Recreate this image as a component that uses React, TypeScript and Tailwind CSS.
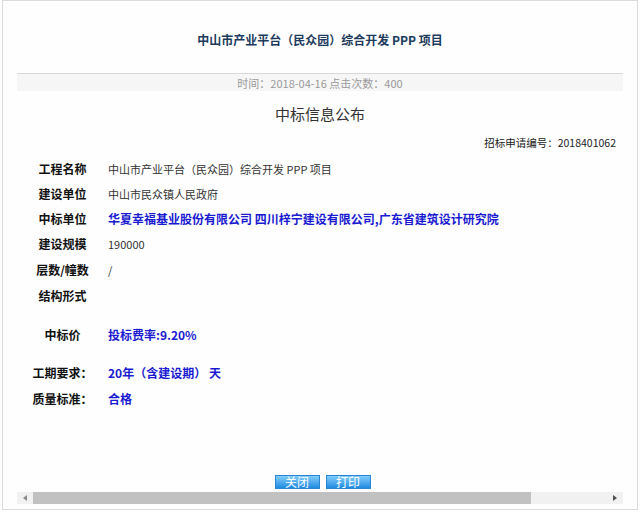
import React from 'react';

const rows: { label: string; value: string; blue?: boolean; h: string }[] = [
  { label: '工程名称', value: '中山市产业平台（民众园）综合开发 PPP 项目', h: 'h-[25px]' },
  { label: '建设单位', value: '中山市民众镇人民政府', h: 'h-[25px]' },
  { label: '中标单位', value: '华夏幸福基业股份有限公司 四川梓宁建设有限公司,广东省建筑设计研究院', blue: true, h: 'h-[25px]' },
  { label: '建设规模', value: '190000', h: 'h-[26px]' },
  { label: '层数/幢数', value: '/', h: 'h-[26px]' },
  { label: '结构形式', value: '', h: 'h-[26px]' },
  { label: '中标价', value: '投标费率:9.20%', blue: true, h: 'h-[52px]' },
  { label: '工期要求：', value: '20年（含建设期） 天', blue: true, h: 'h-[24px]' },
  { label: '质量标准：', value: '合格', blue: true, h: 'h-[28px]' },
];

export default function App() {
  return (
    <div
      className="w-[641px] h-[512px] bg-white overflow-hidden"
      style={{ fontFamily: '"Noto Sans CJK SC", "Liberation Sans", sans-serif' }}
    >
      <div className="ml-[2px] w-[636px] h-[510px] border border-[#dcdcdc] bg-[#fefefe] flex flex-col">
        {/* title */}
        <div className="h-[72px] pt-[31px] text-center text-[12px] leading-[16px] font-bold text-[#1d3a5c]">
          中山市产业平台（民众园）综合开发 PPP 项目
        </div>

        {/* date band */}
        <div className="mx-[14px] h-[18px] border-t border-[#d8d8d8] bg-[#f6f6f6] flex items-center justify-center text-[11px] leading-[14px] text-[#9a9a9a]">
          时间：2018-04-16 点击次数：400
        </div>

        <div className="mt-[13px] text-center text-[15px] leading-[20px] text-[#333]">中标信息公布</div>

        <div className="mt-[11px] pr-[21px] text-right text-[10.5px] leading-[16px] text-[#222]">
          招标申请编号：2018401062
        </div>

        <div className="mt-[5px] flex flex-col">
          {rows.map((r) => (
            <div key={r.label} className={`${r.h} flex items-center leading-[16px]`}>
              <div className="ml-[27px] w-[65px] text-center text-[12px] font-bold text-[#111]">{r.label}</div>
              <div
                className={
                  r.blue
                    ? 'ml-[13px] text-[12px] font-bold text-[#1a1ad0]'
                    : 'ml-[13px] text-[11px] text-[#333]'
                }
              >
                {r.value}
              </div>
            </div>
          ))}
        </div>

        {/* buttons */}
        <div className="mt-auto pl-[5px] flex justify-center gap-[6px]">
          {['关闭', '打印'].map((t) => (
            <button
              key={t}
              className="w-[45px] h-[14px] border border-[#2a86d2] bg-gradient-to-b from-[#7fcdfa] to-[#1b8be0] text-white text-[12px] leading-[12px] flex items-center justify-center"
            >
              {t}
            </button>
          ))}
        </div>

        {/* horizontal scrollbar */}
        <div className="mx-[14px] mt-[3px] mb-[5px] h-[12px] bg-[#f1f1f1] flex items-center">
          <div className="w-[16px] h-full flex items-center justify-center">
            <svg width="4" height="6" viewBox="0 0 4 6">
              <path d="M4 0 L0 3 L4 6 Z" fill="#8a8a8a" />
            </svg>
          </div>
          <div className="w-[498px] h-full bg-[#c1c1c1]" />
          <div className="flex-1" />
          <div className="w-[16px] h-full flex items-center justify-center">
            <svg width="4" height="6" viewBox="0 0 4 6">
              <path d="M0 0 L4 3 L0 6 Z" fill="#505050" />
            </svg>
          </div>
        </div>
      </div>
    </div>
  );
}
